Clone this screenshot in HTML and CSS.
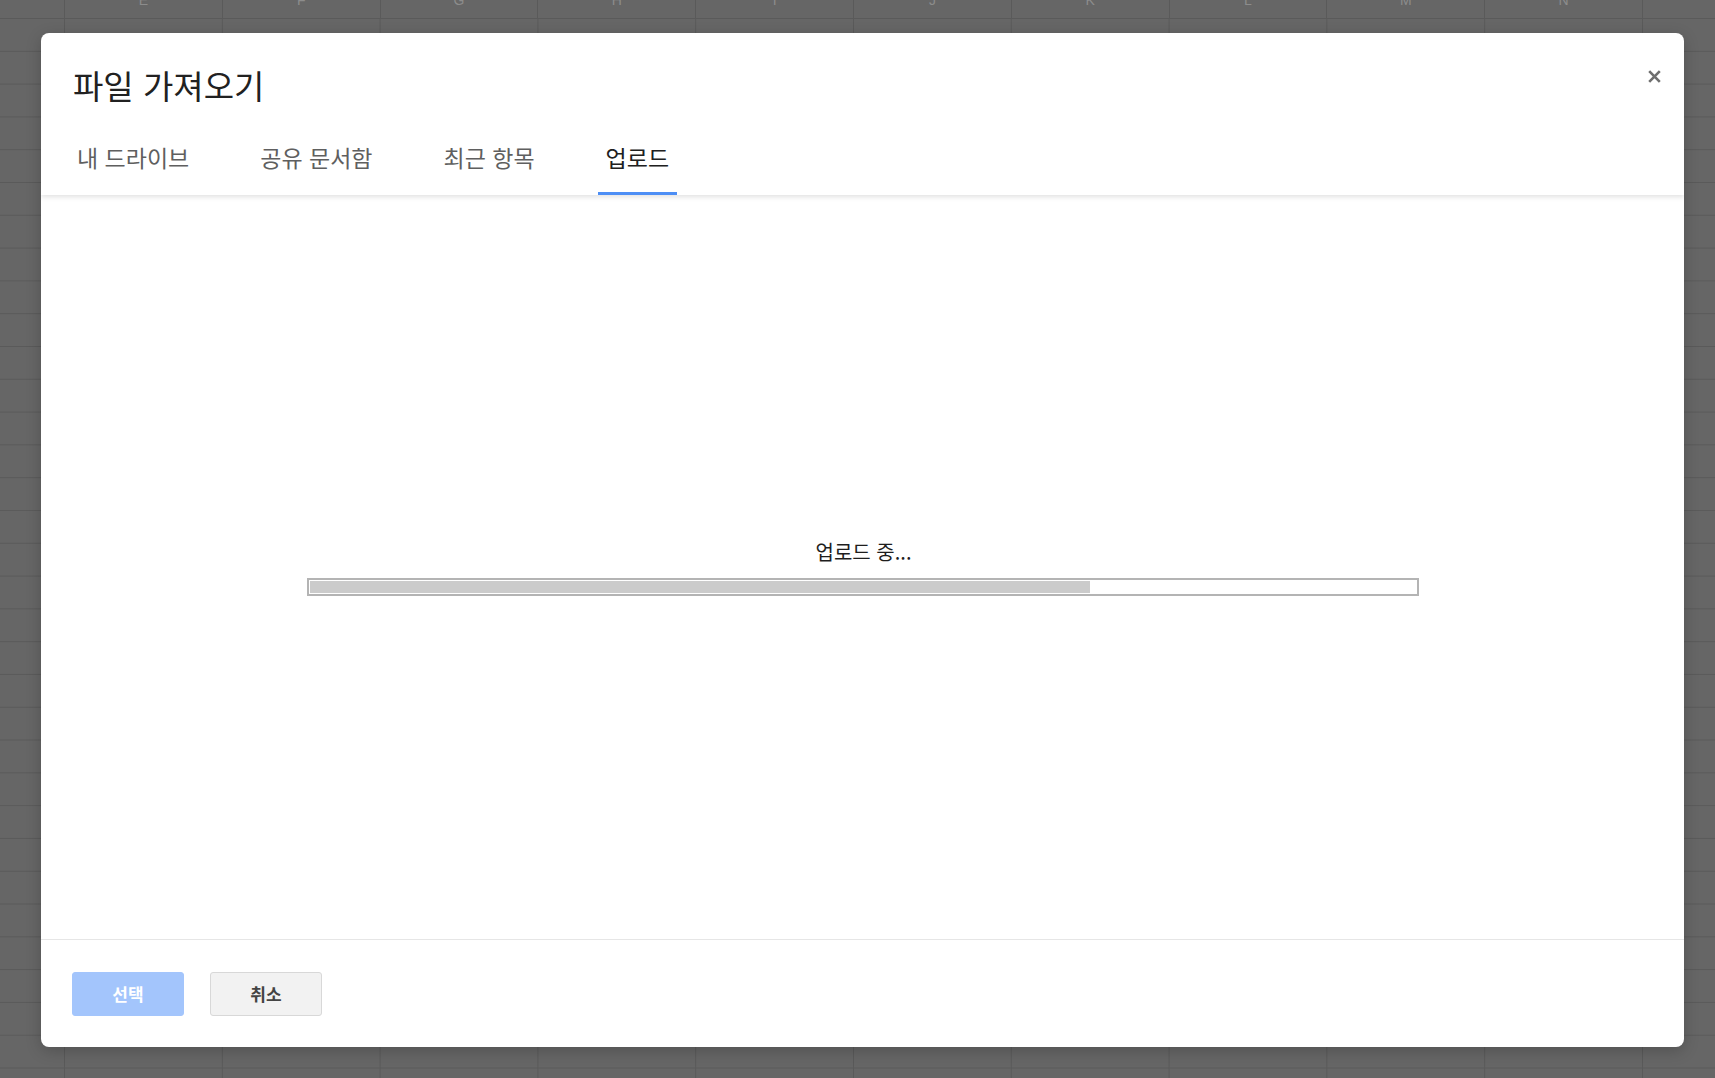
FILE: index.html
```html
<!DOCTYPE html>
<html lang="ko">
<head>
    <meta charset="UTF-8">
    <meta name="viewport" content="width=device-width, initial-scale=1.0">
    <title>파일 가져오기</title>
    <link rel="stylesheet" href="styles.css">
</head>
<body>

    <div class="sheet">
        <div class="sheet-head">
            <div class="corner"></div>
            <div class="col"><span>E</span></div>
            <div class="col"><span>F</span></div>
            <div class="col"><span>G</span></div>
            <div class="col"><span>H</span></div>
            <div class="col"><span>I</span></div>
            <div class="col"><span>J</span></div>
            <div class="col"><span>K</span></div>
            <div class="col"><span>L</span></div>
            <div class="col"><span>M</span></div>
            <div class="col"><span>N</span></div>
            <div class="col"><span>O</span></div>
        </div>
        <div class="sheet-grid"></div>
    </div>

    <div class="dialog">
        <div class="dialog-header">
            <h2 class="title">파일 가져오기</h2>
            <div class="tabs">
                <div class="tab">내 드라이브</div>
                <div class="tab">공유 문서함</div>
                <div class="tab">최근 항목</div>
                <div class="tab active">업로드</div>
            </div>
            <button class="close" title="닫기">
                <svg width="13" height="13" viewBox="0 0 13 13">
                    <path d="M1.2 1.2 L11.8 11.8 M11.8 1.2 L1.2 11.8" stroke="#6f6f6f" stroke-width="2.6" fill="none"/>
                </svg>
            </button>
        </div>

        <div class="dialog-body">
            <div class="upload-status">업로드 중...</div>
            <div class="progress">
                <div class="progress-fill" style="width: 70.6%"></div>
            </div>
        </div>

        <div class="dialog-footer">
            <button class="btn btn-primary" disabled>선택</button>
            <button class="btn">취소</button>
        </div>
    </div>

</body>
</html>
```

FILE: styles.css
```css
body {
    margin: 0;
    height: 1078px;
    overflow: hidden;
    background-color: #666;
    font-family: "Noto Sans CJK KR", "Noto Sans", sans-serif;
}
.sheet {
    height: 100%;
    display: flex;
    flex-direction: column;
}
.sheet-head {
    display: flex;
    height: 19px;
    flex-shrink: 0;
    border-bottom: 1px solid #5a5a5a;
    box-sizing: border-box;
    overflow: hidden;
}
.corner {
    width: 64px;
    flex-shrink: 0;
    border-right: 1px solid #5a5a5a;
}
.col {
    width: 157.8px;
    flex-shrink: 0;
    box-sizing: border-box;
    border-right: 1px solid #5a5a5a;
    text-align: center;
    font-family: "Liberation Sans", Arial, sans-serif;
    font-size: 14px;
    line-height: 14px;
    color: #8c8c8c;
}
.col span {
    display: block;
    margin-top: -7px;
}
.sheet-grid {
    flex: 1;
    background-image:
        linear-gradient(to right, #5a5a5a 1px, transparent 1px),
        linear-gradient(to bottom, transparent 32px, #5a5a5a 32px, #5a5a5a 33px, transparent 33px);
    background-size: 157.8px 100%, 100% 32.8px;
    background-position: 64px 0, 0 0;
}

.dialog {
    position: absolute;
    left: 41px;
    top: 33px;
    width: 1643px;
    height: 1014px;
    background: #fff;
    border-radius: 8px;
    box-shadow: 0 4px 16px rgba(0, 0, 0, 0.2);
    display: flex;
    flex-direction: column;
    overflow: hidden;
}
.dialog-header {
    position: relative;
    padding: 0 28px;
    box-shadow: 0 2px 5px rgba(0, 0, 0, 0.12);
    z-index: 1;
}
.title {
    margin: 31px 0 0 4px;
    font-size: 33px;
    line-height: 42px;
    font-weight: normal;
    color: #212121;
}
.tabs {
    display: flex;
    gap: 55px;
    margin-top: 36px;
}
.tab {
    padding: 0 8px 19px;
    font-size: 23px;
    line-height: 31px;
    color: #5f5f5f;
    border-bottom: 3px solid transparent;
}
.tab.active {
    color: #202020;
    border-bottom-color: #4d8ef5;
}
.close {
    position: absolute;
    top: 33px;
    right: 20px;
    width: 20px;
    height: 20px;
    padding: 0;
    border: none;
    background: none;
    display: flex;
    align-items: center;
    justify-content: center;
    cursor: pointer;
}

.dialog-body {
    flex: 1;
    display: flex;
    flex-direction: column;
    align-items: center;
    justify-content: center;
}
.upload-status {
    font-size: 20px;
    line-height: 26px;
    color: #1e1e1e;
    margin-bottom: 13px;
    padding-left: 2px;
}
.progress {
    width: 1112px;
    height: 18px;
    box-sizing: border-box;
    border: 2px solid #b4b4b4;
    padding: 1px;
    background: #fff;
}
.progress-fill {
    height: 100%;
    background: #cbcbcb;
}

.dialog-footer {
    height: 108px;
    flex-shrink: 0;
    box-sizing: border-box;
    border-top: 1px solid #e6e6e6;
    padding: 0 31px;
    display: flex;
    align-items: center;
    gap: 26px;
}
.btn {
    width: 112px;
    height: 44px;
    border: 1px solid #d8d8d8;
    border-radius: 3px;
    background: #f2f2f2;
    color: #444;
    font-family: "Noto Sans CJK KR", sans-serif;
    font-size: 17px;
    font-weight: bold;
    cursor: pointer;
}
.btn-primary {
    border-color: #a3c5fc;
    background: #a3c5fc;
    color: #fff;
}
```
